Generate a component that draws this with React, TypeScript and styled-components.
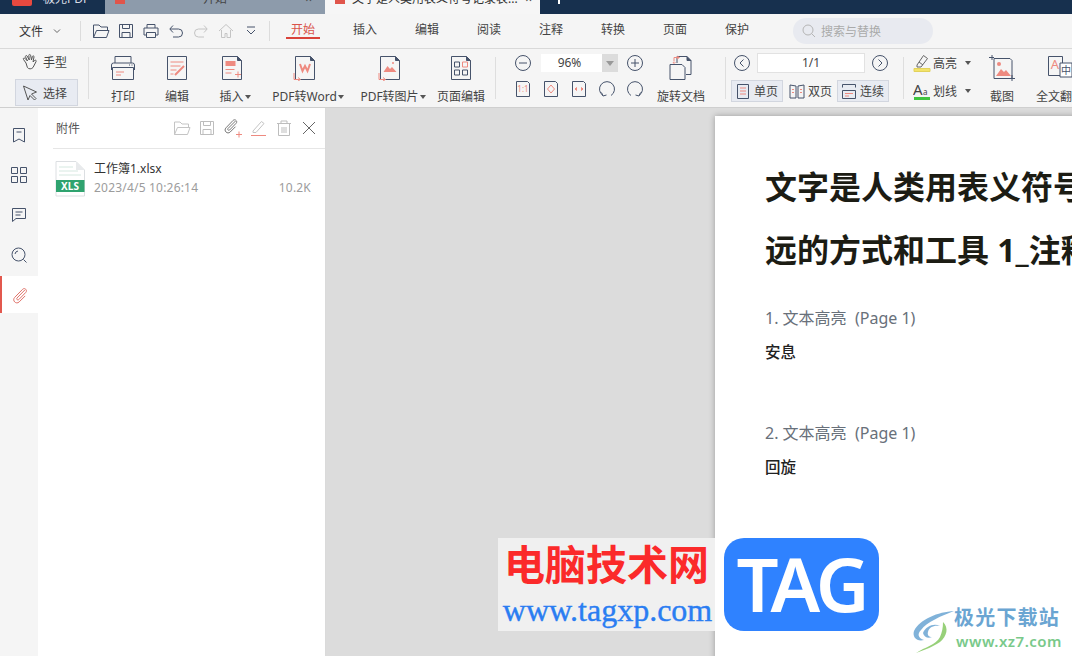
import React, { FunctionComponent, ReactNode } from 'react'
import styled, { createGlobalStyle } from 'styled-components'

const ink = '#46536b'
const red = '#ee8a80'

const GlobalStyle = createGlobalStyle`
  html, body {
    margin: 0;
    padding: 0;
    background: #dcdcdc;
  }
  * {
    box-sizing: border-box;
  }
`

const Root = styled.div`
  position: relative;
  width: 1072px;
  height: 656px;
  overflow: hidden;
  display: flex;
  flex-direction: column;
  font-family: 'Noto Sans', 'Noto Sans CJK SC', sans-serif;
  font-size: 12px;
  color: #444;
`

/* title strip, only its lower edge is in the picture */
const TitleBar = styled.div`
  height: 14px;
  flex: none;
  display: flex;
  align-items: flex-end;
  overflow: hidden;
  background: #17304e;
`
const Logo = styled.div`
  width: 20px;
  height: 26px;
  margin-left: 12px;
  margin-bottom: 8px;
  border-radius: 2px;
  background: #e8493f;
  flex: none;
`
const AppName = styled.div`
  width: 73px;
  height: 30px;
  line-height: 30px;
  padding-left: 11px;
  color: #d7dde5;
  flex: none;
`
const Tab = styled.div<{ $active?: boolean }>`
  width: ${p => (p.$active ? '215px' : '220px')};
  margin-right: ${p => (p.$active ? '18px' : '0')};
  height: 30px;
  line-height: 30px;
  flex: none;
  display: flex;
  padding: ${p => (p.$active ? '0 8px 0 10px' : '0 13px 0 10px')};
  overflow: hidden;
  white-space: nowrap;
  background: ${p => (p.$active ? '#f6f6f6' : '#8d9bab')};
  color: ${p => (p.$active ? '#333' : '#444')};
`
const TabMark = styled.div`
  width: 10px;
  height: 20px;
  margin-top: 0;
  background: #e0554b;
  flex: none;
`
const TabTitle = styled.div<{ $center?: boolean }>`
  flex: 1;
  padding-left: ${p => (p.$center ? '0' : '7px')};
  text-align: ${p => (p.$center ? 'center' : 'left')};
`
const Plus = styled.div`
  width: 2px;
  height: 4px;
  align-self: flex-start;
  background: #fff;
`

const MenuBar = styled.div`
  height: 35px;
  flex: none;
  display: flex;
  align-items: center;
  background: #f5f5f5;
  border-bottom: 1px solid #d9d9d9;
`
const FileMenu = styled.div`
  width: 80px;
  padding-left: 19px;
  display: flex;
  align-items: center;
  gap: 9px;
  color: #333;
`
const MenuSep = styled.div`
  width: 1px;
  height: 20px;
  background: #dcdcdc;
  flex: none;
`
const QuickIcons = styled.div`
  width: 188px;
  padding-left: 11px;
  display: flex;
  align-items: center;
  gap: 7px;
`
const MenuTabs = styled.div`
  display: flex;
  margin-left: 2px;
`
const MenuTab = styled.div<{ $active?: boolean }>`
  position: relative;
  width: 62px;
  height: 34px;
  line-height: 32px;
  text-align: center;
  color: ${p => (p.$active ? '#d9534a' : '#444')};
  &::after {
    content: '';
    display: ${p => (p.$active ? 'block' : 'none')};
    position: absolute;
    left: 14px;
    right: 14px;
    bottom: 9px;
    height: 2px;
    background: #d9433a;
  }
`
const SearchBox = styled.div`
  width: 140px;
  height: 26px;
  margin-left: 25px;
  padding-left: 9px;
  border-radius: 13px;
  background: #e8eaf0;
  color: #aaa;
  display: flex;
  align-items: center;
  gap: 5px;
`

const Toolbar = styled.div`
  height: 59px;
  flex: none;
  display: flex;
  padding-left: 15px;
  overflow: hidden;
  background: #f5f5f5;
  border-bottom: 1px solid #cfcfcf;
`
const ToolSep = styled.div<{ $ml: number; $mr?: number }>`
  width: 1px;
  height: 42px;
  margin: 8px ${p => p.$mr ?? 0}px 0 ${p => p.$ml}px;
  background: #dedede;
  flex: none;
`
const ModeGroup = styled.div`
  width: 63px;
  flex: none;
  display: flex;
  flex-direction: column;
`
const ModeButton = styled.div<{ $selected?: boolean }>`
  height: ${p => (p.$selected ? '27px' : '26px')};
  margin-top: ${p => (p.$selected ? '4px' : '0')};
  padding-left: 5px;
  display: flex;
  align-items: center;
  gap: 4px;
  background: ${p => (p.$selected ? '#e8ebf2' : 'transparent')};
  border: 1px solid ${p => (p.$selected ? '#d2d6df' : 'transparent')};
`
const BigButton = styled.div<{ $w: number }>`
  width: ${p => p.$w}px;
  flex: none;
  padding-top: 6px;
  display: flex;
  flex-direction: column;
  align-items: center;
  gap: 8px;
  white-space: nowrap;
`
const BigIcon = styled.div<{ $caret?: boolean }>`
  height: 26px;
  margin-right: ${p => (p.$caret ? '6px' : '0')};
  display: flex;
  justify-content: center;
`
const BigLabel = styled.div`
  height: 16px;
  line-height: 16px;
  display: flex;
  align-items: center;
  gap: 1px;
`
const Caret = styled.span<{ $ml?: number }>`
  width: 0;
  height: 0;
  margin-left: ${p => p.$ml ?? 0}px;
  border-left: 3.5px solid transparent;
  border-right: 3.5px solid transparent;
  border-top: 4px solid #555;
  flex: none;
`
const SmallGroup = styled.div<{ $w: number; $pl: number }>`
  width: ${p => p.$w}px;
  padding: 5px 0 0 ${p => p.$pl}px;
  flex: none;
  display: flex;
  flex-direction: column;
  gap: 8px;
`
const SmallRow = styled.div<{ $gap?: number; $pl?: number }>`
  height: 18px;
  padding-left: ${p => p.$pl ?? 0}px;
  display: flex;
  align-items: center;
  gap: ${p => p.$gap ?? 0}px;
`
const ToggleRow = styled.div`
  height: 22px;
  display: flex;
  align-items: center;
  gap: 2px;
  white-space: nowrap;
`
const Combo = styled.div`
  width: 77px;
  height: 18px;
  line-height: 18px;
  margin: 0 8px 0 9px;
  flex: none;
  position: relative;
  background: #fff;
  text-align: center;
  padding-right: 20px;
  color: #444;
  &::after {
    content: '';
    position: absolute;
    right: 0;
    top: 0;
    width: 16px;
    height: 18px;
    background: #dcdcdc;
  }
  &::before {
    content: '';
    position: absolute;
    right: 4px;
    top: 7px;
    z-index: 1;
    border-left: 4px solid transparent;
    border-right: 4px solid transparent;
    border-top: 5px solid #999;
  }
`
const PageInput = styled.div`
  width: 108px;
  height: 20px;
  line-height: 18px;
  margin: 0 6px;
  flex: none;
  background: #fff;
  border: 1px solid #e2e2e2;
  text-align: center;
  color: #444;
`
const Toggle = styled.div<{ $on?: boolean; $w: number }>`
  width: ${p => p.$w}px;
  height: 22px;
  padding-left: 3px;
  flex: none;
  display: flex;
  align-items: center;
  gap: 3px;
  background: ${p => (p.$on ? '#e8ebf2' : 'transparent')};
  border: 1px solid ${p => (p.$on ? '#d2d6df' : 'transparent')};
`
const MarkRow = styled.div<{ $mt?: number }>`
  height: 18px;
  margin-top: ${p => p.$mt ?? 0}px;
  display: flex;
  align-items: center;
  gap: 2px;
`

const Body = styled.div`
  flex: 1;
  min-height: 0;
  display: flex;
`
const Rail = styled.div`
  width: 38px;
  flex: none;
  padding-top: 7px;
  display: flex;
  flex-direction: column;
  background: #f5f5f5;
`
const RailItem = styled.div<{ $active?: boolean }>`
  height: ${p => (p.$active ? '37px' : '40px')};
  margin-top: ${p => (p.$active ? '1px' : '0')};
  display: flex;
  align-items: center;
  justify-content: center;
  background: ${p => (p.$active ? '#fff' : 'transparent')};
  border-left: ${p => (p.$active ? '2px solid #e2584e' : '0')};
`
const Panel = styled.div`
  width: 288px;
  flex: none;
  background: #fff;
  border-right: 1px solid #dadada;
`
const PanelHead = styled.div`
  height: 41px;
  margin-left: 15px;
  padding: 0 7px 0 3px;
  display: flex;
  align-items: center;
  justify-content: space-between;
  border-bottom: 1px solid #e6e6e6;
  color: #555;
`
const PanelTools = styled.div`
  display: flex;
  align-items: center;
  gap: 7px;
`
const FileRow = styled.div`
  margin: 12px 14px 0 17px;
  display: flex;
  gap: 9px;
`
const FileInfo = styled.div`
  flex: 1;
  display: flex;
  flex-direction: column;
  gap: 3px;
`
const FileName = styled.div`
  line-height: 16px;
  color: #333;
`
const FileMeta = styled.div`
  line-height: 16px;
  letter-spacing: 0.2px;
  color: #9c9c9c;
  display: flex;
  justify-content: space-between;
`
const Viewer = styled.div`
  flex: 1;
  min-width: 0;
  padding: 8px 0 0 389px;
  overflow: hidden;
  background: #dcdcdc;
`
const Page = styled.div`
  width: 700px;
  height: 700px;
  padding: 39px 0 0 50px;
  background: #fff;
  box-shadow: 0 0 6px rgba(0, 0, 0, 0.3);
`
const DocTitle = styled.div`
  width: 640px;
  font-size: 32px;
  font-weight: 700;
  line-height: 63px;
  color: #1c1c14;
  white-space: nowrap;
`
const NoteHead = styled.div<{ $mt: number }>`
  margin-top: ${p => p.$mt}px;
  font-size: 16px;
  line-height: 24px;
  color: #68707a;
  white-space: pre;
`
const NoteBody = styled.div`
  margin-top: 11px;
  font-size: 15.5px;
  font-weight: 500;
  line-height: 22px;
  color: #222;
`

/* site stamps that sit over the page */
const StampCard = styled.div`
  position: absolute;
  left: 498px;
  top: 538px;
  width: 217px;
  height: 93px;
  padding-top: 1px;
  text-align: center;
  overflow: hidden;
  white-space: nowrap;
  background: #f0f0f0;
`
const StampTitle = styled.div`
  font-size: 41px;
  line-height: 46px;
  font-weight: 700;
  color: #fb2a2a;
  font-family: 'Noto Sans CJK SC', sans-serif;
`
const StampUrl = styled.div`
  margin-top: 10px;
  padding-left: 2px;
  font-family: 'Liberation Serif', serif;
  font-size: 32px;
  line-height: 30px;
  color: #2a7df2;
  -webkit-text-stroke: 0.4px #2a7df2;
`
const TagBadge = styled.div`
  position: absolute;
  left: 724px;
  top: 538px;
  width: 155px;
  height: 93px;
  border-radius: 20px;
  background: #2f82ff;
  color: #fff;
  font-family: 'Noto Sans', sans-serif;
  font-size: 74px;
  font-weight: 600;
  letter-spacing: -3px;
  line-height: 92px;
  text-align: center;
`
const XzBrand = styled.div`
  position: absolute;
  left: 912px;
  top: 604px;
  display: flex;
  gap: 2px;
`
const XzText = styled.div`
  display: flex;
  flex-direction: column;
`
const XzName = styled.div`
  font-family: 'Noto Sans CJK SC', sans-serif;
  font-size: 20px;
  letter-spacing: 1.2px;
  line-height: 26px;
  font-weight: 700;
  color: #6aa5d2;
  white-space: nowrap;
`
const XzUrl = styled.div`
  margin-top: 1px;
  padding-left: 2px;
  font-size: 15px;
  letter-spacing: 0.5px;
  line-height: 20px;
  font-weight: 600;
  color: #79c98a;
`

const Ico: FunctionComponent<{ s?: number; h?: number; c?: string; children: ReactNode }> = ({ s = 18, h, c = ink, children }) => (
  <svg width={s} height={h ?? s} viewBox={`0 0 ${s} ${h ?? s}`} fill="none" stroke={c} strokeWidth="1" style={{ flex: 'none' }}>
    {children}
  </svg>
)

const Chevron = () => (
  <Ico s={10} c="#666"><path d="M2 3.5l3 3 3-3" /></Ico>
)

// file shaped outline used by most of the big toolbar buttons
const Sheet: FunctionComponent<{ children?: ReactNode }> = ({ children }) => (
  <Ico s={24} h={26}>
    <path d="M2.5 1.5h15l4 4v19h-19z" />
    <path d="M17.5 1.5v4h4" fill={ink} />
    {children}
  </Ico>
)

const HandIcon = () => (
  <Ico s={18} c="#555">
    <path d="M5 10L2.500 6.500c-.8-1 .5-2 1.400-1.200L6.500 8 4.500 3.800c-.5-1 1-1.800 1.600-.8L8.300 7 7.800 2.400c-.1-1.200 1.600-1.300 1.800-.1l.9 4.700.9-3.500c.3-1.100 1.800-.7 1.600.4l-1 5 1.800-1.500c.9-.7 2 .4 1.200 1.300L12 14.500c-1.500 1.800-4.300 1.800-5.600 0z" />
  </Ico>
)
const ArrowIcon = () => (
  <Ico s={18} c="#555"><path d="M2.500 2L15.500 8l-5 2 4.500 4.500-1.500 1.500L9 11.500 7 16z" /></Ico>
)

const FolderIcon: FunctionComponent<{ c?: string }> = ({ c }) => (
  <Ico c={c}><path d="M1.500 15.500V3h5.500l2 2h6.500v3.500M1.500 15.500h13L17 8.500H4.500z" /></Ico>
)
const SaveIcon: FunctionComponent<{ c?: string }> = ({ c }) => (
  <Ico c={c}><path d="M2.500 2.500h13v13h-13zM5.500 2.500v4h7v-4M5 15.500v-5h8v5" /></Ico>
)
const PrintSmall = () => (
  <Ico><path d="M5 6V2.500h8V6M2 6h14v7h-2.500M4.500 13H2V6M4.500 10.500h9v5h-9z" /></Ico>
)
const HomeIcon = () => (
  <Ico c="#c4c4c4"><path d="M2 9l7-6.500L16 9M4.500 8v7.500h3.500v-4h2v4h3.500V8" /></Ico>
)
const Undo: FunctionComponent<{ c?: string; flip?: boolean }> = ({ c, flip }) => (
  <Ico c={c}>
    <g transform={flip ? 'matrix(-1 0 0 1 18 0)' : undefined}>
      <path d="M3 7h8.500a3.800 3.800 0 010 8H6M6 3.500L2.800 7 6 10.500" />
    </g>
  </Ico>
)
const CollapseIcon = () => (
  <Ico><path d="M5 5h8M5 8l4 4 4-4" /></Ico>
)
const SearchIcon = () => (
  <Ico s={14} c="#b5b5b5"><circle cx="6" cy="6" r="5" /><path d="M9.500 9.500l3.500 3.500" /></Ico>
)

const PrintBig = () => (
  <Ico s={26}>
    <path d="M5 8V1.500h16V8M1.500 15V10a2 2 0 012-2h19a2 2 0 012 2v5" />
    <path d="M2.500 12.500h21v12h-21z" />
    <path d="M6 17h8M6 20h5" stroke={red} />
    <path d="M19 10h1M21.500 10h1" />
  </Ico>
)
const EditBig = () => (
  <Ico s={24} h={26}>
    <path d="M2.500 1.500h19v23h-19z" />
    <path d="M5.500 7h13M5.500 11h10M5.500 15h6M5.500 19h3" stroke={red} />
    <path d="M10 20l9-9" stroke={red} strokeWidth="2" />
  </Ico>
)
const InsertBig = () => (
  <Sheet>
    <path d="M5.500 6h10v5h-10z" fill={red} stroke="none" />
    <path d="M5.500 14.500h9M5.500 18h6M15 19.500h6M18 16.500v6" stroke={red} />
  </Sheet>
)
const WordBig = () => (
  <Sheet>
    <path d="M7 9l2.500 7L12 11l2.500 5L17 9" stroke={red} strokeWidth="2" />
    <path d="M1 18v6.500h6M5 22.500l2.500 2-2.500 1.500" stroke={red} />
  </Sheet>
)
const PicBig = () => (
  <Sheet>
    <path d="M5.500 17l4-6 2.500 3 2-2 4.500 5z" fill={red} stroke="none" />
    <circle cx="15" cy="8" r="1" fill={red} stroke="none" />
    <path d="M1 18v6.500h6M5 22.500l2.500 2-2.500 1.500" stroke={red} />
  </Sheet>
)
const PagesBig = () => (
  <Sheet>
    <path d="M5.500 7h5v5h-5zM5.500 15h5v5h-5zM13.500 15h5v5h-5z" />
    <path d="M13.500 7h5v5h-5z" stroke={red} />
  </Sheet>
)
const RotateDoc = () => (
  <Ico s={26}>
    <path d="M9 8V1.500h10l4 4v14h-5" />
    <path d="M19 1.500v4h4" fill={ink} />
    <path d="M2 9.500h12l3 3v12H2z" />
    <path d="M6 6.500V2.500h5M9 1L11.500 2.500 9 4M5 7l1 1.500L7.500 7" stroke={red} />
  </Ico>
)
const ShotBig = () => (
  <Ico s={26}>
    <path d="M5 3.500h16l2 2v18H5z" />
    <path d="M3 0v5M0 2.500h5M23 20v6M19 23.500h7" />
    <path d="M7 21l5-7 3 3 2-2 5 6z" fill={red} stroke="none" />
    <circle cx="10" cy="9" r="2" fill={red} stroke="none" />
  </Ico>
)
const TranslateBig = () => (
  <Ico s={26}>
    <path d="M1.500 1.500h14v19h-14z" />
    <text x="8" y="14" textAnchor="middle" fontSize="13" fill={red} stroke="none" fontFamily="Noto Sans, sans-serif">A</text>
    <path d="M13 8h12v14H13z" fill="#fff" />
    <text x="19" y="19" textAnchor="middle" fontSize="10" fill={ink} stroke="none" fontFamily="Noto Sans CJK SC, sans-serif">中</text>
  </Ico>
)

const RoundBtn: FunctionComponent<{ children: ReactNode }> = ({ children }) => (
  <Ico><circle cx="9" cy="9" r="7.500" />{children}</Ico>
)
const RatioIcon: FunctionComponent<{ children?: ReactNode }> = ({ children }) => (
  <Ico><path d="M2.500 1.500h11l2 2v13h-13z" />{children}</Ico>
)
const RotateArrow: FunctionComponent<{ flip?: boolean }> = ({ flip }) => (
  <Ico>
    <g transform={flip ? 'matrix(-1 0 0 1 18 0)' : undefined}>
      <path d="M5 15.500A7.500 7.500 0 1 1 13 15.500" />
      <path d="M3.500 12.500l1.500 3.500 3.500-1" />
    </g>
  </Ico>
)
const SingleIcon = () => (
  <Ico s={16}>
    <path d="M2.500 1.500h11v14h-11z" />
    <path d="M5 5h6M5 8h6M5 11h6" stroke={red} />
  </Ico>
)
const DoubleIcon = () => (
  <Ico s={16}>
    <path d="M1 2l6 1v12H1zM15 2l-6 1v12h6z" />
    <path d="M3 6.500h2M3 9.500h2M11 6.500h2M11 9.500h2" stroke={red} />
  </Ico>
)
const ContinuousIcon = () => (
  <Ico s={16}>
    <path d="M1.500 4.500v-3h13v3M1.500 7.500h13v8h-13z" />
    <path d="M4 10.500h8M4 13h4" stroke={red} />
  </Ico>
)
const HighlightIcon = () => (
  <Ico s={18}>
    <path d="M4 11L10.500 1.500l4 3L8 13H4z" stroke="#666" />
    <path d="M6 8l4 3" stroke="#666" />
    <path d="M1 14.500h16v3H1z" fill="#f3e36a" stroke="#e2d25c" />
  </Ico>
)
const UnderlineIcon = () => (
  <Ico s={18}>
    <text x="0" y="13" fontSize="15" fill="#444" stroke="none" fontFamily="Noto Sans, sans-serif">A</text>
    <text x="10" y="13" fontSize="8" fill="#444" stroke="none" fontFamily="Noto Sans, sans-serif">a</text>
    <path d="M1 15h16v3H1z" fill="#3fc43f" stroke="none" />
  </Ico>
)

const BookmarkIcon = () => (
  <Ico><path d="M3.500 2.500h11v13.500L9 13l-5.500 3z" /><path d="M6.500 6h5" /></Ico>
)
const GridIcon = () => (
  <Ico><path d="M1.500 1.500h6v6h-6zM10.500 1.500h6v6h-6zM1.500 10.500h6v6h-6zM10.500 10.500h6v6h-6z" /></Ico>
)
const CommentIcon = () => (
  <Ico><path d="M2.500 2.500h13v10H6l-3.500 3zM5.500 6h7M5.500 9h5" /></Ico>
)
const FindIcon = () => (
  <Ico><circle cx="8.500" cy="8.500" r="6.500" /><path d="M13.500 13.500l3 3M5 8a3.500 3.500 0 013-3" /></Ico>
)
const Clip: FunctionComponent<{ c: string }> = ({ c }) => (
  <Ico c={c}>
    <path d="M13.800 4L6 12c-1 1.100.7 2.700 1.800 1.600l7-7.200c2-2.100-1.100-5.200-3.200-3.100L3.700 11.400c-3 3.100 1.500 7.500 4.500 4.500l6-6" />
  </Ico>
)
const ClipAdd = () => (
  <Ico s={20}>
    <g stroke="#777">
      <path d="M12.500 3L5 10.500c-1 1 .6 2.500 1.600 1.500l6.500-6.700c1.900-1.900-1-4.800-3-2.900L3 9.800c-2.800 2.800 1.400 7 4.200 4.200l5.300-5.300" />
    </g>
    <path d="M13 16.500h6M16 13.500v6" stroke={red} />
  </Ico>
)
const PenIcon = () => (
  <Ico s={18} c="#c4c4c4">
    <path d="M3 12L11.500 2.500l2.500 2L6 13.500H3z" />
    <path d="M1 16.500h15" stroke={red} />
  </Ico>
)
const TrashIcon = () => (
  <Ico c="#bdbdbd"><path d="M3.500 5v11.500h11V5M2 4.500h14M6 4V2h6v2M7 8v6M9 8v6M11 8v6" /></Ico>
)
const CloseIcon = () => (
  <Ico c="#666"><path d="M3 3l12 12M15 3L3 15" /></Ico>
)

const XlsIcon = () => (
  <svg width="30" height="36" viewBox="0 0 30 36" style={{ flex: 'none' }}>
    <path d="M1 .5h20l8.500 8.500v26H1z" fill="#fff" stroke="#dcdfe2" />
    <path d="M21 .5v8.500h8.500z" fill="#e8eaec" />
    <path d="M4 6h14M4 10h19M4 14h22" stroke="#d5e8e0" strokeWidth="1" />
    <rect x="1" y="19" width="28.500" height="12" fill="#2fa36f" />
    <text x="15" y="29" textAnchor="middle" fill="#fff" fontSize="10" fontWeight="700" fontFamily="Noto Sans, sans-serif">XLS</text>
  </svg>
)

const SwirlLogo = () => (
  <svg width="44" height="44" viewBox="0 0 44 44" style={{ flex: 'none', marginTop: '6px', marginRight: '-4px' }}>
    <path d="M42 1C26 2 8 9 2 21c-2 6 3 11 10 9-6-2-7-6-3-10C15 12 29 6 42 1z" fill="#6aa5d2" opacity="0.85" />
    <path d="M11 23c3-7 11-10 17-7-6-1-11 1-12 6-1 3 1 5 4 5-4 2-8 0-9-4z" fill="#6aa5d2" opacity="0.85" />
    <path d="M31 12c6 6 4 14-3 20-6 4-15 8-24 11 9-6 20-8 24-16 2-5 3-9 3-15z" fill="#8ccb6a" opacity="0.9" />
  </svg>
)

const App: FunctionComponent = () => (
  <Root>
    <GlobalStyle />
    <TitleBar>
      <Logo />
      <AppName>极光PDF</AppName>
      <Tab><TabMark /><TabTitle $center>开始</TabTitle><span>×</span></Tab>
      <Tab $active><TabMark /><TabTitle>文字是人类用表义符号记录表...</TabTitle><span>×</span></Tab>
      <Plus />
    </TitleBar>

    <MenuBar>
      <FileMenu>文件<Chevron /></FileMenu>
      <MenuSep />
      <QuickIcons>
        <FolderIcon />
        <SaveIcon />
        <PrintSmall />
        <Undo />
        <Undo c="#c4c4c4" flip />
        <HomeIcon />
        <CollapseIcon />
      </QuickIcons>
      <MenuSep />
      <MenuTabs>
        <MenuTab $active>开始</MenuTab>
        <MenuTab>插入</MenuTab>
        <MenuTab>编辑</MenuTab>
        <MenuTab>阅读</MenuTab>
        <MenuTab>注释</MenuTab>
        <MenuTab>转换</MenuTab>
        <MenuTab>页面</MenuTab>
        <MenuTab>保护</MenuTab>
      </MenuTabs>
      <SearchBox><SearchIcon />搜索与替换</SearchBox>
    </MenuBar>

    <Toolbar>
      <ModeGroup>
        <ModeButton><HandIcon />手型</ModeButton>
        <ModeButton $selected><ArrowIcon />选择</ModeButton>
      </ModeGroup>
      <ToolSep $ml={10} $mr={7} />
      <BigButton $w={54}><BigIcon><PrintBig /></BigIcon><BigLabel>打印</BigLabel></BigButton>
      <BigButton $w={54}><BigIcon><EditBig /></BigIcon><BigLabel>编辑</BigLabel></BigButton>
      <BigButton $w={62}><BigIcon $caret><InsertBig /></BigIcon><BigLabel>插入<Caret /></BigLabel></BigButton>
      <BigButton $w={84}><BigIcon $caret><WordBig /></BigIcon><BigLabel>PDF转Word<Caret /></BigLabel></BigButton>
      <BigButton $w={86}><BigIcon $caret><PicBig /></BigIcon><BigLabel>PDF转图片<Caret /></BigLabel></BigButton>
      <BigButton $w={50}><BigIcon><PagesBig /></BigIcon><BigLabel>页面编辑</BigLabel></BigButton>
      <ToolSep $ml={9} />
      <SmallGroup $w={154} $pl={18}>
        <SmallRow>
          <RoundBtn><path d="M5 9h8" /></RoundBtn>
          <Combo>96%</Combo>
          <RoundBtn><path d="M5 9h8M9 5v8" /></RoundBtn>
        </SmallRow>
        <SmallRow $gap={10}>
          <RatioIcon><text x="9" y="12" textAnchor="middle" fontSize="8" fill={red} stroke="none" fontFamily="Noto Sans, sans-serif">1:1</text></RatioIcon>
          <RatioIcon><path d="M9 5l3.500 4L9 13 5.500 9z" stroke={red} /></RatioIcon>
          <RatioIcon><path d="M5 9l1.500-1.500v3zM13 9l-1.500-1.500v3z" stroke={red} /></RatioIcon>
          <RotateArrow />
          <RotateArrow flip />
        </SmallRow>
      </SmallGroup>
      <BigButton $w={62}><BigIcon><RotateDoc /></BigIcon><BigLabel>旋转文档</BigLabel></BigButton>
      <ToolSep $ml={13} />
      <SmallGroup $w={164} $pl={5}>
        <SmallRow $pl={2}>
          <RoundBtn><path d="M10.500 5.500L7 9l3.500 3.500" /></RoundBtn>
          <PageInput>1/1</PageInput>
          <RoundBtn><path d="M7.500 5.500L11 9l-3.500 3.500" /></RoundBtn>
        </SmallRow>
        <ToggleRow>
          <Toggle $on $w={52}><SingleIcon />单页</Toggle>
          <Toggle $w={50}><DoubleIcon />双页</Toggle>
          <Toggle $on $w={52}><ContinuousIcon />连续</Toggle>
        </ToggleRow>
      </SmallGroup>
      <ToolSep $ml={13} />
      <SmallGroup $w={70} $pl={9}>
        <MarkRow><HighlightIcon />高亮<Caret $ml={6} /></MarkRow>
        <MarkRow $mt={2}><UnderlineIcon />划线<Caret $ml={6} /></MarkRow>
      </SmallGroup>
      <BigButton $w={56}><BigIcon><ShotBig /></BigIcon><BigLabel>截图</BigLabel></BigButton>
      <BigButton $w={60}><BigIcon><TranslateBig /></BigIcon><BigLabel>全文翻译</BigLabel></BigButton>
    </Toolbar>

    <Body>
      <Rail>
        <RailItem><BookmarkIcon /></RailItem>
        <RailItem><GridIcon /></RailItem>
        <RailItem><CommentIcon /></RailItem>
        <RailItem><FindIcon /></RailItem>
        <RailItem $active><Clip c="#e0736a" /></RailItem>
      </Rail>
      <Panel>
        <PanelHead>
          附件
          <PanelTools>
            <FolderIcon c="#c4c4c4" />
            <SaveIcon c="#bdbdbd" />
            <ClipAdd />
            <PenIcon />
            <TrashIcon />
            <CloseIcon />
          </PanelTools>
        </PanelHead>
        <FileRow>
          <XlsIcon />
          <FileInfo>
            <FileName>工作簿1.xlsx</FileName>
            <FileMeta><span>2023/4/5 10:26:14</span><span>10.2K</span></FileMeta>
          </FileInfo>
        </FileRow>
      </Panel>
      <Viewer>
        <Page>
          <DocTitle>文字是人类用表义符号记录表达</DocTitle>
          <DocTitle>远的方式和工具 1_注释</DocTitle>
          <NoteHead $mt={25}>1. 文本高亮  (Page 1)</NoteHead>
          <NoteBody>安息</NoteBody>
          <NoteHead $mt={58}>2. 文本高亮  (Page 1)</NoteHead>
          <NoteBody>回旋</NoteBody>
        </Page>
      </Viewer>
    </Body>

    <StampCard>
      <StampTitle>电脑技术网</StampTitle>
      <StampUrl>www.tagxp.com</StampUrl>
    </StampCard>
    <TagBadge>TAG</TagBadge>
    <XzBrand>
      <SwirlLogo />
      <XzText>
        <XzName>极光下载站</XzName>
        <XzUrl>www.xz7.com</XzUrl>
      </XzText>
    </XzBrand>
  </Root>
)

export default App
